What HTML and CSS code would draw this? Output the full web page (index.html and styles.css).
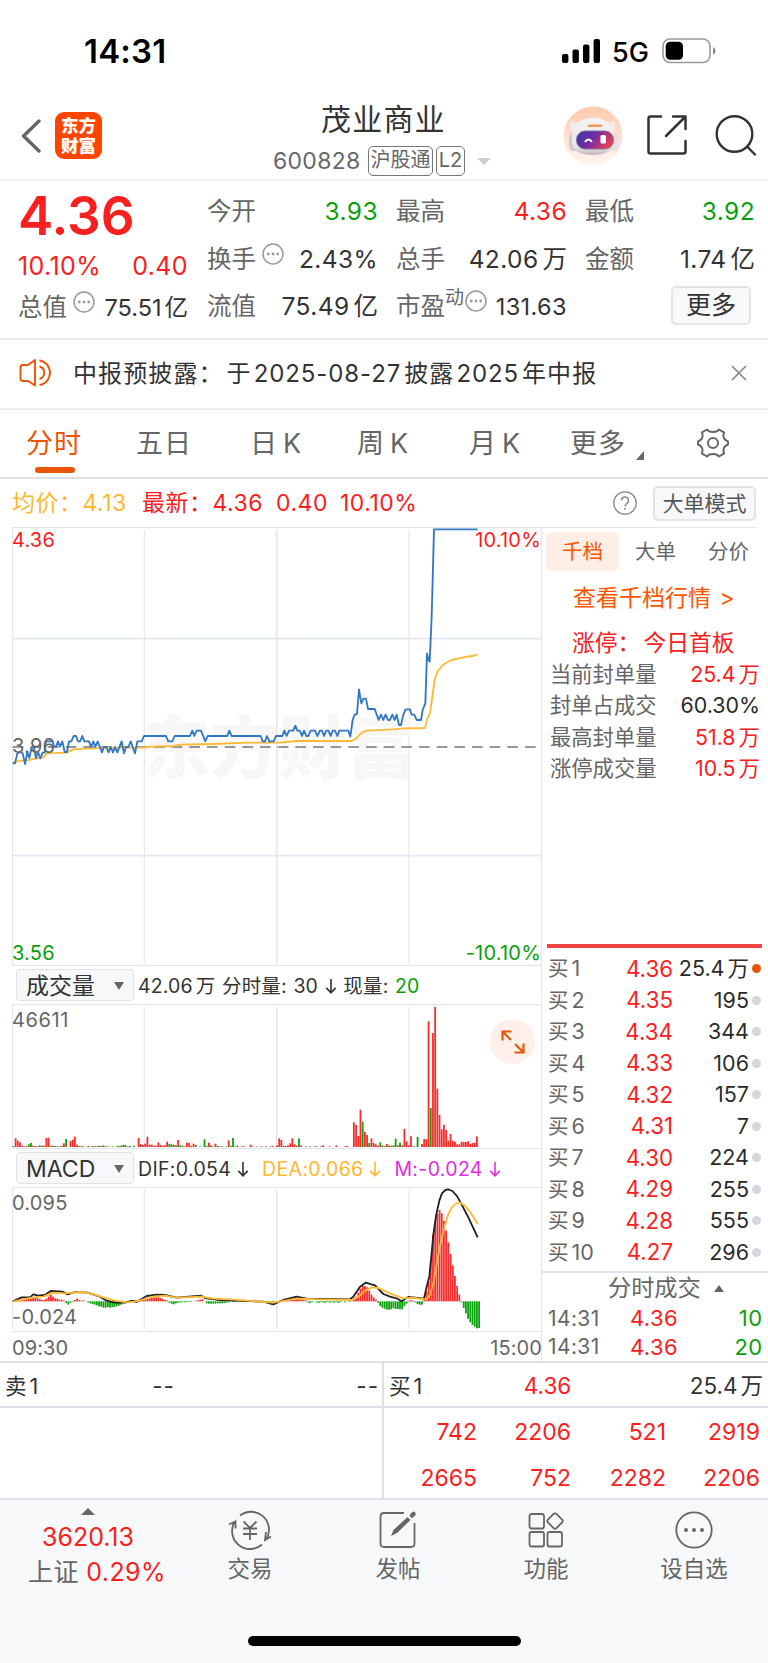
FILE: index.html
```html
<!DOCTYPE html>
<html lang="zh-CN">
<head>
  <meta charset="UTF-8">
  <meta name="viewport" content="width=device-width, initial-scale=1.0">
  <title>茂业商业 600828</title>
  <link rel="stylesheet" href="styles.css">
</head>
<body>
  <!-- Status bar -->
  <div class="status">
    <span class="clock">14:31</span>
    <div class="status-right">
      <svg width="39" height="24" viewBox="0 0 39 24"><rect x="0" y="15" width="6.4" height="9" rx="2"/><rect x="10.5" y="10.5" width="6.4" height="13.5" rx="2"/><rect x="21" y="5.5" width="6.4" height="18.5" rx="2"/><rect x="31.6" y="0" width="6.4" height="24" rx="2"/></svg>
      <span class="net">5G</span>
      <svg width="54" height="26" viewBox="0 0 54 26"><rect x="1" y="1" width="47" height="23.5" rx="7" fill="#fff" stroke="#999" stroke-width="1.6"/><rect x="3.7" y="3.7" width="17.3" height="18" rx="4.5"/><path d="M51 9v8q2.600-1.500 2.600-4T51 9z" fill="#8a8a8a"/></svg>
    </div>
  </div>

  <!-- Header -->
  <header class="header">
    <svg class="back" width="20" height="34" viewBox="0 0 20 34"><path d="M18 2 2.500 17 18 32" fill="none" stroke="#666" stroke-width="3.4" stroke-linecap="round" stroke-linejoin="round"/></svg>
    <div class="logo"><span>东方</span><span>财富</span></div>
    <div class="stock">
      <h1>茂业商业</h1>
      <div class="code"><span class="num">600828</span><span class="tag">沪股通</span><span class="tag tag-l2">L2</span><i class="down"></i></div>
    </div>
    <svg class="robot" width="60" height="60" viewBox="0 0 60 60">
      <defs>
        <linearGradient id="halo" x1="0" y1="0" x2="0" y2="1"><stop offset="0" stop-color="#ffc9ae"/><stop offset="1" stop-color="#fff6f2"/></linearGradient>
        <linearGradient id="visor" x1="0" y1="0" x2="1" y2="0.4"><stop offset="0" stop-color="#3237b5"/><stop offset="0.55" stop-color="#7a2b9c"/><stop offset="1" stop-color="#e0405a"/></linearGradient>
        <linearGradient id="shell" x1="0" y1="0" x2="0" y2="1"><stop offset="0" stop-color="#f7f5f6"/><stop offset="0.8" stop-color="#e6e2e6"/><stop offset="1" stop-color="#bdb7be"/></linearGradient>
      </defs>
      <circle cx="30" cy="30" r="29.5" fill="url(#halo)"/>
      <path d="M8 14q-3 9 3 14l9-12q-9 2-12-2zM51 14q3 9-3 14l-9-12q9 2 12-2z" fill="#f0ebee"/>
      <rect x="6" y="27" width="10" height="18" rx="5" fill="#cfc8d0"/><rect x="46" y="27" width="10" height="18" rx="5" fill="#e6dfe4"/>
      <path d="M9 36C8 19 17 12 30 12S52 19 51 36c0 9-9 13-21 13S9 45 9 36z" fill="url(#shell)"/>
      <path d="m24 21 2-2.500h12l2 1.500-2 1z" fill="#ee9b52"/>
      <rect x="13.5" y="25" width="37" height="18" rx="8.5" fill="url(#visor)" stroke="#85758f"/>
      <path d="M22 36q3.500-5 7 0" fill="none" stroke="#fff" stroke-width="2"/><rect x="37.500" y="29" width="5.500" height="8.500" rx="1.500" fill="#fff"/>
    </svg>
    <svg class="share" width="40" height="40" viewBox="0 0 40 40" fill="none" stroke="#333" stroke-width="2.5" stroke-linecap="round" stroke-linejoin="round"><path d="M14 1.500H3.500q-2 0-2 2v33q0 2 2 2h33q2 0 2-2V26M26 1.500h12.500V14M38 2 19 21"/></svg>
    <svg class="search" width="42" height="42" viewBox="0 0 42 42" fill="none" stroke="#333" stroke-width="2.4" stroke-linecap="round"><circle cx="19.500" cy="20" r="17.800"/><path d="m32 32.500 8 8"/></svg>
  </header>

  <!-- Quote -->
  <section class="quote">
    <div class="q-main">
      <div class="price">4.36</div>
      <div class="q-row red"><span class="num">10.10%</span><span class="num">0.40</span></div>
      <div class="q-row"><label>总值<svg class="dots"><use href="#dots"/></svg></label><span class="small">75.51<b>亿</b></span></div>
    </div>
    <div class="q-col">
      <div class="q-row"><label>今开</label><span class="green num">3.93</span></div>
      <div class="q-row"><label>换手<svg class="dots"><use href="#dots"/></svg></label><span class="num">2.43%</span></div>
      <div class="q-row"><label>流值</label><span class="num">75.49<b>亿</b></span></div>
    </div>
    <div class="q-col">
      <div class="q-row"><label>最高</label><span class="red num">4.36</span></div>
      <div class="q-row"><label>总手</label><span class="num">42.06<b>万</b></span></div>
      <div class="q-row"><label>市盈<sup>动</sup><svg class="dots tight"><use href="#dots"/></svg></label><span class="small wide">131.63</span></div>
    </div>
    <div class="q-col">
      <div class="q-row"><label>最低</label><span class="green num">3.92</span></div>
      <div class="q-row"><label>金额</label><span class="num">1.74<b>亿</b></span></div>
      <div class="q-row end"><button class="btn-more">更多</button></div>
    </div>
  </section>

  <!-- Notice -->
  <section class="notice">
    <svg width="34" height="30" viewBox="0 0 34 30" fill="none" stroke="#ea5504" stroke-width="1.9" stroke-linejoin="round"><path d="M16 2v25.500L9 23H4q-2.500 0-2.500-2.500v-11Q1.500 7 4 7h5zM20.500 2.500a12.400 12.400 0 0 1 0 24.500M20.500 8.500a6.500 6.500 0 0 1 0 12.500"/></svg>
    <p>中报预披露：<span>于</span><b>2025-08-27</b>披露<b>2025</b>年中报</p>
    <svg width="16" height="16" viewBox="0 0 16 16"><path d="m1 1 14 14M15 1 1 15" stroke="#888" stroke-width="1.7"/></svg>
  </section>

  <!-- Period tabs -->
  <nav class="tabs">
    <a class="active">分时</a>
    <a>五日</a>
    <a>日<b>K</b></a>
    <a>周<b>K</b></a>
    <a>月<b>K</b></a>
    <a>更多<i class="corner"></i></a>
    <svg width="32" height="30" viewBox="0 0 32 30" fill="none" stroke="#666" stroke-width="2" stroke-linejoin="round"><path d="M10 1.500q1.500 2.500 6 2.500t6-2.500l5 2.800q-1.200 3.800 0 6 1 2 4 3.200v3q-3 1.200-4 3.200-1.200 2.200 0 6l-5 2.800q-1.500-2.500-6-2.500t-6 2.500l-5-2.800q1.200-3.800 0-6-1-2-4-3.200v-3q3-1.200 4-3.200 1.200-2.200 0-6z"/><circle cx="16" cy="15" r="5"/></svg>
  </nav>

  <div class="info">
    <span class="avg">均价：<em>4.13</em></span>
    <span class="red last">最新：<em>4.36</em></span>
    <span class="red">0.40</span>
    <span class="red">10.10%</span>
    <svg width="24" height="24" viewBox="0 0 24 24" fill="none" stroke="#888" stroke-width="1.3"><circle cx="12" cy="12" r="11.200"/><path d="M8.500 9.500a3.500 3.500 0 1 1 5.800 2.600q-2.300 1.600-2.300 3.400M12 17v1.800" stroke-width="1.6"/></svg>
    <button class="btn-mode">大单模式</button>
  </div>

  <main class="board">
    <!-- Charts -->
    <div class="charts">
      <div class="chart price-chart">
        <svg width="530" height="439" viewBox="36 351 1590 1317">
          <g class="grid"><path d="M37.500 351V1668M36 352.500H1626M36 1666H1626M433 360V1660M1227 360V1660M1624 351V1668"/><path d="M830 360V1660M36 686H1626M36 1337H1626" stroke-width="5"/></g>
          <text class="mark" x="425" y="1090" textLength="820">东方财富</text>
          <path d="M38 1011H1614" stroke="#777" stroke-width="4" stroke-dasharray="32 21"/>
          <polyline class="line avg-line" points="38,1058 60,1052 80,1052 110,1045 130,1042 140,1030 200,1028 220,1018 280,1015 340,1013 432,1013 450,1010 520,1008 540,1004 640,1002 740,998 840,998 890,993 1055,993 1070,984 1085,968 1100,962 1180,958 1210,955 1275,954 1282,925 1290,910 1297,860 1304,810 1312,784 1332,762 1355,750 1400,740 1420,738 1433,732"/>
          <polyline class="line price-line" points="38,1060 45,1060 52,1030 60,1026 68,1030 75,1062 82,1026 88,1044 95,1012 102,1012 108,1045 114,1026 121,1045 128,1028 134,1028 138,994 158,994 162,1010 168,1010 174,994 180,1010 187,994 194,1026 201,1026 207,994 214,994 221,978 228,978 234,994 240,994 247,978 253,994 267,994 273,1011 280,994 286,1011 293,994 306,1027 312,1011 319,1011 326,1027 332,1011 339,1027 345,1011 352,1027 365,994 372,1030 378,1011 385,1011 392,994 405,1030 412,994 425,994 432,978 498,978 505,994 517,994 524,978 570,978 577,962 583,978 590,962 603,962 616,994 623,978 682,978 688,962 695,978 782,978 788,994 795,994 801,978 808,994 821,994 828,978 847,978 853,962 860,978 867,962 880,962 886,947 892,962 899,962 906,978 912,962 919,978 925,978 932,962 945,962 952,978 960,962 966,962 972,978 979,962 985,962 992,978 998,962 1005,962 1012,978 1018,962 1045,962 1051,980 1058,930 1064,914 1071,912 1077,838 1084,880 1090,866 1098,866 1104,897 1124,897 1136,930 1143,914 1150,930 1157,914 1164,930 1170,930 1177,914 1184,930 1190,914 1197,945 1203,945 1210,914 1217,898 1230,898 1235,914 1243,914 1250,930 1263,930 1268,900 1276,880 1281,730 1285,748 1289,755 1295,620 1302,358 1433,358"/>
        </svg>
        <span class="lab red tl">4.36</span><span class="lab red tr">10.10%</span>
        <span class="lab mid">3.96</span>
        <span class="lab green bl">3.56</span><span class="lab green br">-10.10%</span>
      </div>

      <div class="ind">
        <div class="select">成交量<i></i></div>
        <span class="vol-txt">42.06<b>万</b> 分时量: 30 <svg class="arr"><use href="#arrow"/></svg> 现量: <em class="green">20</em></span>
      </div>
      <div class="chart vol-chart">
        <svg width="530" height="145" viewBox="36 132 1590 435">
          <g class="grid"><path d="M37.500 132V567M36 134H1626M433 141V567M1227 141V567M1624 132V567M36 566H1626"/><path d="M830 141V567" stroke-width="5"/></g>
          <g id="vol"></g>
        </svg>
        <span class="lab tl">46611</span>
        <div class="expand"><svg width="24" height="24" viewBox="0 0 24 24" fill="none" stroke="#ea5504" stroke-width="2.2"><path d="M1.500 10.500v-9h9M2 2l8 8M22.500 13.500v9h-9M22 22l-8-8"/></svg></div>
      </div>

      <div class="ind">
        <div class="select">MACD<i></i></div>
        <span class="macd-txt"><span>DIF:0.054 <svg class="arr"><use href="#arrow"/></svg></span><span class="avg">DEA:0.066 <svg class="arr"><use href="#arrow"/></svg></span><span class="mag">M:-0.024 <svg class="arr"><use href="#arrow"/></svg></span></span>
      </div>
      <div class="chart macd-chart">
        <svg width="530" height="145" viewBox="36 681 1590 435">
          <g class="grid"><path d="M37.500 681V1108M36 682.500H1626M433 690V1108M1227 690V1108M1624 681V1116M36 1115H1626"/><path d="M830 690V1108" stroke-width="5"/></g>
          <g id="macd"></g>
          <polyline class="line dif-line" points="38,1024 65,1012 90,1012 100,1003 115,1007 135,1005 152,993 187,995 203,1003 225,996 262,998 300,1010 320,1022 345,1028 375,1028 397,1022 410,1026 440,1008 470,1004 495,1005 530,1013 603,1007 615,1014 660,1020 790,1025 820,1033 850,1020 890,1010 920,1016 1050,1018 1060,1010 1080,980 1097,968 1125,976 1150,1002 1170,1010 1190,1015 1205,1024 1225,1011 1272,1016 1280,980 1288,950 1294,890 1300,825 1308,768 1318,722 1326,700 1336,690 1345,688 1357,693 1370,707 1382,728 1405,772 1433,832"/>
          <polyline class="line avg-line" points="38,1025 100,1012 130,1010 160,998 195,1000 240,996 270,1000 310,1012 345,1022 380,1027 410,1024 460,1010 495,1007 530,1013 605,1010 640,1016 700,1019 820,1028 890,1016 960,1018 1055,1020 1075,1010 1095,992 1115,982 1135,984 1170,1000 1210,1015 1235,1013 1278,1018 1290,1004 1300,970 1308,925 1318,868 1332,805 1345,762 1357,740 1369,730 1381,728 1395,737 1410,755 1433,792"/>
        </svg>
        <span class="lab tl">0.095</span><span class="lab bl">-0.024</span>
      </div>
      <div class="times"><span>09:30</span><span>15:00</span></div>
    </div>

    <!-- Order book -->
    <aside class="book">
      <div class="book-tabs"><a class="active">千档</a><a>大单</a><a>分价</a></div>
      <a class="book-link">查看千档行情 <span>&gt;</span></a>
      <div class="limit">涨停：<span>今日首板</span></div>
      <ul class="stats">
        <li><span>当前封单量</span><span class="red">25.4<b>万</b></span></li>
        <li><span>封单占成交</span><span class="dark">60.30%</span></li>
        <li><span>最高封单量</span><span class="red">51.8<b>万</b></span></li>
        <li><span>涨停成交量</span><span class="red">10.5<b>万</b></span></li>
      </ul>
      <ul class="bids">
        <li><span>买<b>1</b></span><em>4.36</em><span class="dark">25.4<b>万</b></span><i class="hot"></i></li>
        <li><span>买<b>2</b></span><em>4.35</em><span class="dark">195</span><i></i></li>
        <li><span>买<b>3</b></span><em>4.34</em><span class="dark">344</span><i></i></li>
        <li><span>买<b>4</b></span><em>4.33</em><span class="dark">106</span><i></i></li>
        <li><span>买<b>5</b></span><em>4.32</em><span class="dark">157</span><i></i></li>
        <li><span>买<b>6</b></span><em>4.31</em><span class="dark">7</span><i></i></li>
        <li><span>买<b>7</b></span><em>4.30</em><span class="dark">224</span><i></i></li>
        <li><span>买<b>8</b></span><em>4.29</em><span class="dark">255</span><i></i></li>
        <li><span>买<b>9</b></span><em>4.28</em><span class="dark">555</span><i></i></li>
        <li><span>买<b>10</b></span><em>4.27</em><span class="dark">296</span><i></i></li>
      </ul>
      <div class="deals">
        <h2>分时成交<i></i></h2>
        <div class="deal"><span>14:31</span><em>4.36</em><span class="green">10</span></div>
        <div class="deal"><span>14:31</span><em>4.36</em><span class="green">20</span></div>
      </div>
    </aside>
  </main>

  <!-- Queue -->
  <section class="queue">
    <div class="side">
      <div class="side-head"><span>卖<b>1</b></span><span class="dash">--</span><span class="dash">--</span></div>
    </div>
    <div class="side">
      <div class="side-head"><span>买<b>1</b></span><span class="red">4.36</span><span>25.4<b>万</b></span></div>
      <div class="lots"><span>742</span><span>2206</span><span>521</span><span>2919</span><span>2665</span><span>752</span><span>2282</span><span>2206</span></div>
    </div>
  </section>

  <!-- Bottom bar -->
  <footer class="bottom">
    <div class="index"><i></i><span class="red">3620.13</span><div>上证 <span class="red">0.29%</span></div></div>
    <a><svg width="44" height="40" viewBox="0 0 44 40"><path d="M12 5.500A18 18 0 0 1 39 28M34 34.500A18 18 0 0 1 6.500 12M1 14.500l6.500-3v7M43 26.500l-6 3.500 1-8M15.500 11.500 22 18l6.500-6.500M22 18v12M15 18.500h14M15 24h14"/></svg>交易</a>
    <a><svg width="44" height="40" viewBox="0 0 44 40"><path d="M28 3H8q-3.500 0-3.500 3.500v27Q4.500 37 8 37h27q3.500 0 3.500-3.500V13"/><path d="M36 5.500 37.500 4" stroke-width="4.5" stroke-linecap="round"/><path d="m15 26 2.500-6L31.500 7l3 3L21 23z" fill="#666" stroke="none"/></svg>发帖</a>
    <a><svg width="44" height="40" viewBox="0 0 44 40"><rect x="5.500" y="4" width="14.500" height="14.500" rx="2"/><rect x="5.500" y="22" width="14.500" height="14.500" rx="2"/><rect x="23.500" y="22" width="14.500" height="14.500" rx="2"/><rect x="25" y="5" width="12" height="12" rx="2" transform="rotate(45 31 11)"/></svg>功能</a>
    <a><svg width="44" height="40" viewBox="0 0 44 40"><circle cx="22" cy="20" r="17.700"/><g fill="#666" stroke="none"><circle cx="14" cy="20" r="2"/><circle cx="22" cy="20" r="2"/><circle cx="30" cy="20" r="2"/></g></svg>设自选</a>
    <div class="home"></div>
  </footer>

  <svg class="defs">
    <symbol id="dots" viewBox="0 0 22 22"><circle cx="11" cy="11" r="10" fill="none" stroke="#999" stroke-width="1.5"/><g fill="#999"><circle cx="6.300" cy="11" r="1.400"/><circle cx="11" cy="11" r="1.400"/><circle cx="15.700" cy="11" r="1.400"/></g></symbol>
    <symbol id="arrow" viewBox="0 0 12 16"><path d="M6 0v14.500M1 9.500l5 5.200 5-5.200" fill="none" stroke="currentColor" stroke-width="1.7"/></symbol>
  </svg>

  <script>
    // One value per minute, negative volume = price went down
    const volume = [-3,26,19,14,4,2,3,-8,-12,4,3,2,-5,4,4,27,28,-4,4,-3,2,-2,4,11,-24,0,18,22,31,7,3,-3,2,0,3,0,3,-3,2,-4,3,-5,-2,2,0,-2,0,-2,-3,4,-6,-6,2,-3,0,-4,0,27,9,6,10,31,7,7,4,4,14,6,4,5,16,-9,-8,7,-5,21,-5,-4,2,13,12,4,10,-6,0,-2,0,-23,-3,13,5,-2,10,-3,2,-2,0,-2,20,-3,-27,2,-4,0,2,2,0,0,7,-2,0,2,0,2,0,-2,0,2,3,0,5,26,21,-4,3,5,11,26,8,4,-26,5,0,-2,0,2,0,-2,2,0,2,5,0,0,2,0,0,5,0,0,0,2,3,0,0,74,66,33,112,-76,46,36,-12,26,12,8,4,-14,5,-3,9,-5,4,-5,-25,5,-13,5,54,17,5,32,2,-2,-30,0,9,24,23,377,-117,342,420,175,96,53,67,51,19,39,19,16,8,8,16,15,15,17,9,12,13,32];
    const macd = [0,1,3,5,6,7,8,9,9,10,10,9,7,4,4,8,14,20,14,9,8,5,5,3,-5,-10,-4,-2,4,8,4,2,3,0,-3,-6,-8,-10,-12,-15,-16,-19,-19,-17,-19,-17,-17,-15,-13,-10,-6,-3,0,-2,-1,-3,2,3,4,5,6,9,10,10,11,12,12,10,7,4,3,-4,-7,-9,-6,-4,-3,-3,-3,-2,-2,-2,0,2,3,5,6,0,-6,-7,-7,-7,-7,-6,-6,-6,-5,-4,-3,0,-2,-2,-2,0,-2,-2,-2,-2,-2,-2,-2,-2,-3,-3,-4,-5,-5,-5,-3,-2,1,2,4,6,8,8,8,7,8,8,7,6,5,3,-3,-5,-3,0,-3,-5,-2,-3,-5,-2,-4,-2,-4,-2,-5,-2,0,-3,0,-2,2,6,14,26,38,46,46,42,32,20,12,5,-4,-14,-19,-22,-25,-25,-24,-20,-23,-23,-24,-24,-14,-7,2,4,2,-3,-8,-10,-10,12,30,60,120,200,240,262,274,264,241,212,177,142,108,76,46,20,-3,-20,-36,-52,-63,-71,-76,-81,-80];

    function drawBars(id, values, base) {
      document.getElementById(id).innerHTML = values.map((v, i) => {
        const x = 37.5 + i * 6.59;
        const up = v > 0;
        const y = id === 'vol' || up ? base - Math.abs(v) : base;
        return `<rect x="${x.toFixed(1)}" y="${y}" width="5.4" height="${Math.abs(v)}" fill="${up ? '#fa2b2b' : '#0ca00c'}"/>`;
      }).join('');
    }

    drawBars('vol', volume, 561);
    drawBars('macd', macd, 1024);
  </script>
</body>
</html>
```
FILE: styles.css
```css
* {
  box-sizing: border-box;
}

body {
  margin: 0;
  width: 768px;
  height: 1663px;
  overflow: hidden;
  background: #fff;
  color: #333;
  font-family: Inter, "Noto Sans CJK SC", sans-serif;
  font-size: 24px;
  line-height: 1;
  white-space: nowrap;
}

ul, h1, h2, p {
  margin: 0;
  padding: 0;
  list-style: none;
  font-weight: 400;
}

b, em {
  font-weight: inherit;
  font-style: normal;
}

button {
  font-family: inherit;
  padding: 0;
  color: #333;
  background: #f7f8fa;
  border: 2px solid #e2e4e9;
  border-radius: 5px;
}

svg {
  display: block;
  flex: none;
}

.red { color: #fa2020; }
.green { color: #0a9f0a; }
.avg { color: #ffb72e; }
.mag { color: #e32be3; }
.dark { color: #2b2b2b; }

.defs {
  width: 0;
  height: 0;
}

/* Status bar */
.status {
  display: flex;
  justify-content: space-between;
  height: 90px;
  padding: 38px 52px 0 84px;
  color: #000;
}

.clock {
  font-size: 33px;
  line-height: 27px;
  font-weight: 600;
  letter-spacing: 0.2px;
}

.status-right {
  display: flex;
  align-items: center;
  height: 26px;
}

.net {
  width: 37px;
  margin: 2px 13px 0 11px;
  font-size: 27px;
  font-weight: 500;
}

/* Header */
.header {
  display: flex;
  height: 91px;
  padding-left: 21px;
  border-bottom: 2px solid #f0f0f0;
}

.back { margin-top: 29px; }

.logo {
  display: flex;
  flex-direction: column;
  justify-content: center;
  align-items: center;
  width: 47px;
  height: 47px;
  margin: 22px 0 0 14px;
  border-radius: 9px;
  background: #ff4400;
  color: #fff;
  font-size: 17.5px;
  line-height: 19.5px;
  font-weight: 900;
}

.stock {
  width: 461px;
  padding-left: 171px;
}

h1 {
  margin-top: 13px;
  font-size: 30px;
  line-height: 32px;
  letter-spacing: 1.2px;
  padding-left: 48px;
}

.code {
  display: flex;
  align-items: center;
  height: 32px;
  margin-top: 10px;
  color: #666;
}

.code .num {
  width: 95px;
  font-size: 23px;
  letter-spacing: 0.3px;
}

.tag {
  width: 65px;
  height: 30px;
  margin-right: 3px;
  border: 1.5px solid #777;
  border-radius: 5px;
  font-size: 20px;
  line-height: 27px;
  text-align: center;
}

.tag-l2 { width: 29px; }

.down {
  margin-left: 9px;
  border: 7px solid transparent;
  border-top-color: #ccc;
  border-bottom: 0;
}

.robot { margin-top: 16px; }
.share { margin: 25px 0 0 24px; }
.search { margin: 24px 0 0 28px; }

/* Quote */
.quote {
  display: grid;
  grid-template-columns: 171px 171px 171px 170px;
  column-gap: 18px;
  height: 159px;
  padding-left: 18px;
  border-bottom: 2px solid #ececec;
}

.q-main { padding-top: 8px; }
.q-col { padding-top: 7px; }

.price {
  height: 54px;
  color: #fa2020;
  font-size: 53px;
  line-height: 55px;
  font-weight: 600;
}

.q-row {
  display: flex;
  align-items: center;
  justify-content: space-between;
  height: 47.3px;
  font-size: 24.5px;
}

.q-row label {
  display: flex;
  color: #666;
}

.q-row .num { letter-spacing: 0.4px; }
.q-row b { margin-left: 4px; letter-spacing: 0; }

.q-main .q-row:nth-child(2) { height: 47px; font-size: 25px; padding-right: 1px; }
.q-main .q-row:nth-child(3) { height: 38px; margin-top: -2px; padding-right: 1px; }

.q-row .small {
  font-size: 23.5px;
  padding-top: 2px;
}

.q-row .small b { margin-left: 3px; }
.q-row .wide { letter-spacing: 0.4px; }

.dots {
  width: 22px;
  height: 22px;
  margin: -4px 0 0 6px;
}

.dots.tight { margin-left: 1px; }

sup {
  font-size: 19px;
  line-height: 19px;
  margin-top: -6px;
}

.end { justify-content: flex-end; }

.btn-more {
  width: 80px;
  height: 39px;
  margin: 0 4px 2px 0;
  font-size: 25px;
  line-height: 33px;
}

/* Notice */
.notice {
  display: flex;
  align-items: center;
  height: 70px;
  padding: 0 21px 2px 19px;
  border-bottom: 2px solid #eee;
}

.notice p {
  flex: 1;
  padding: 1px 0 0 20px;
  font-size: 24px;
  letter-spacing: 1.1px;
}

.notice p span { margin-left: 3px; }
.notice b { margin: 0 3px 0 2px; letter-spacing: 0.9px; }

/* Tabs */
.tabs {
  display: flex;
  align-items: center;
  position: relative;
  height: 69px;
  padding: 0 0 1px 26px;
  border-bottom: 2px solid #dfe1e8;
  font-size: 27px;
  color: #666;
}

.tabs a { letter-spacing: 1px; flex: none; }
.tabs b { margin-left: 5px; }
.tabs a:nth-child(1) { width: 110px; }
.tabs a:nth-child(2) { width: 114px; }
.tabs a:nth-child(3) { width: 107px; }
.tabs a:nth-child(4) { width: 112px; }
.tabs a:nth-child(5) { width: 101px; }
.tabs a:nth-child(6) { display: flex; align-items: flex-end; width: 127px; }

.tabs .active {
  color: #ea5504;
}

.tabs .active::after {
  content: "";
  position: absolute;
  left: 35px;
  bottom: 4px;
  width: 40px;
  height: 6px;
  border-radius: 3px;
  background: #ea5504;
}

.corner {
  margin: 0 0 -3px 10px;
  border-left: 8px solid transparent;
  border-bottom: 9px solid #666;
}

/* Info line */
.info {
  display: flex;
  align-items: center;
  height: 48px;
  padding-left: 12px;
  padding-right: 12px;
  font-size: 23px;
}

.info .avg { width: 130px; }
.info .last { width: 134px; }
.info .last + span { width: 64px; }
.info span { flex: none; letter-spacing: 0.5px; padding-top: 1px; }
.info svg { margin: 0 16px 0 auto; }

.btn-mode {
  width: 103px;
  height: 35px;
  font-size: 21px;
  line-height: 29px;
  color: #555;
}

/* Charts */
.board {
  display: flex;
  height: 834px;
}

.charts {
  width: 542px;
  padding-left: 12px;
}

.chart { position: relative; }

.grid {
  fill: none;
  stroke: #e3e6ee;
  stroke-width: 3.5;
}

.line {
  fill: none;
  stroke-width: 5.5;
  stroke-linejoin: round;
}

.price-line { stroke: #3377c4; }
.avg-line { stroke: #ffb934; }
.dif-line { stroke: #222; }

.mark {
  fill: #f7f7f7;
  font-size: 205px;
  font-weight: 900;
}

.lab {
  position: absolute;
  color: #666;
  font-size: 20px;
  line-height: 20px;
  letter-spacing: 0.2px;
}

.lab.red { color: #fa2020; }
.lab.green { color: #0a9f0a; }
.tl { left: 0; top: 3px; }
.tr { right: 1px; top: 3px; }
.mid { left: 0; top: 209px; }
.bl { left: 0; bottom: 3px; }
.br { right: 1px; bottom: 3px; }

.vol-chart .tl, .macd-chart .tl { top: 6px; }
.macd-chart .bl { bottom: 5px; }
.vol-chart .tl { letter-spacing: 0.6px; }

.ind {
  display: flex;
  align-items: center;
  height: 38px;
  padding-left: 4px;
  font-size: 19.5px;
}

.select {
  display: flex;
  align-items: center;
  justify-content: space-between;
  width: 118px;
  height: 32px;
  margin-right: 4px;
  padding: 2px 9px 0 9px;
  background: #f7f8fa;
  border: 1px solid #dfe1e6;
  border-radius: 4px;
  font-size: 23px;
}

.select i {
  border: 5px solid transparent;
  border-top: 8px solid #666;
  border-bottom: 0;
}

.vol-txt {
  padding-top: 3px;
  letter-spacing: 0.15px;
  word-spacing: 1px;
}

.vol-txt b { margin-left: 3px; }

.arr {
  display: inline-block;
  width: 12px;
  height: 15px;
  vertical-align: -1px;
}

.macd-txt {
  display: flex;
  gap: 13px;
  padding-top: 3px;
  letter-spacing: 0.35px;
}

.expand {
  position: absolute;
  right: 7px;
  top: 15px;
  display: grid;
  place-items: center;
  width: 45px;
  height: 45px;
  border-radius: 50%;
  background: #fdefe9;
}

.times {
  display: flex;
  justify-content: space-between;
  padding-top: 6px;
  color: #666;
  font-size: 20px;
  letter-spacing: 0.1px;
}

/* Order book */
.book {
  width: 227px;
  border-left: 1px solid #e3e6ee;
  margin-left: -1px;
  color: #666;
}

.book-tabs {
  display: flex;
  width: 215px;
  padding: 4px 0 0 4px;
  border-top: 1px solid #e3e6ee;
  font-size: 20.5px;
}

.book-tabs a {
  width: 73px;
  height: 39px;
  line-height: 40px;
  text-align: center;
  flex: none;
  border-radius: 6px;
}

.book-tabs .active {
  background: #ffeee6;
  color: #ff5500;
}

.book-link {
  display: block;
  padding: 16px 0 0 31px;
  color: #ff5500;
  font-size: 23px;
  line-height: 22px;
}

.book-link span { margin-left: 2px; }

.limit {
  padding: 22px 0 0 30px;
  color: #fa2020;
  font-size: 22.8px;
  line-height: 23px;
}

.limit span { margin-left: 3px; }

.stats {
  height: 294px;
  margin: 0 6px 0 5px;
  padding: 5px 2px 0 3px;
  border-bottom: 4px solid #ee4444;
}

.stats li {
  display: flex;
  justify-content: space-between;
  align-items: center;
  height: 31.4px;
  font-size: 21.3px;
}

.stats b, .bids span b, .side-head b { margin-left: 3px; }
.stats li span + span { font-size: 21.4px; }

.bids { padding-top: 5px; }

.bids li {
  display: grid;
  grid-template-columns: 61px 64px 76px 9px;
  align-items: center;
  height: 31.5px;
  padding-left: 6px;
  font-size: 20.5px;
}

.bids em {
  color: #fa2020;
  text-align: right;
  font-size: 22.3px;
}

.bids li > span:first-child b { font-size: 21.5px; }

.bids .dark {
  text-align: right;
  font-size: 21.5px;
}

.bids i {
  width: 9px;
  height: 9px;
  margin-left: 3px;
  border-radius: 50%;
  background: #d4d7dd;
}

.bids .hot { background: #ea5504; }

.deals {
  margin-top: 3px;
  border-top: 2px solid #e0e2e8;
}

.deals h2 {
  display: flex;
  align-items: center;
  height: 31px;
  padding-left: 66px;
  font-size: 23.2px;
}

.deals h2 i {
  margin-left: 13px;
  border: 5px solid transparent;
  border-bottom: 7px solid #666;
  border-top: 0;
}

.deal {
  display: grid;
  grid-template-columns: 56px 74px 84.5px;
  align-items: center;
  height: 28.5px;
  padding-left: 6px;
  font-size: 21px;
  letter-spacing: 0.4px;
}

.deal em { color: #fa2020; text-align: right; font-size: 22px; }
.deal .green { text-align: right; font-size: 22px; }

/* Queue */
.queue {
  display: flex;
  height: 139px;
  border-top: 2px solid #dcdfe5;
  border-bottom: 2px solid #dcdfe5;
}

.side { width: 384px; }
.side:first-child { border-right: 2px solid #dcdfe5; }

.side-head {
  display: grid;
  grid-template-columns: 105px 1fr 162px;
  align-items: center;
  height: 45px;
  padding: 4px 5px 0;
  border-bottom: 2px solid #dcdfe5;
  font-size: 22.5px;
}

.side-head span { text-align: center; }
.side-head span:first-child { text-align: left; font-size: 21.5px; }
.side-head span:last-child { text-align: right; }
.side-head .dash { letter-spacing: 1px; }
.side:first-child .side-head { padding-right: 3px; }

.lots {
  display: grid;
  grid-template-columns: 93px 94px 95px 94px;
  color: #fa2020;
  text-align: right;
  font-size: 23px;
  line-height: 46px;
  padding-top: 1px;
}

/* Bottom bar */
.bottom {
  display: flex;
  position: relative;
  height: 164px;
  background: #f7f8fa;
  color: #666;
}

.bottom a {
  width: 148px;
  padding-top: 10px;
  font-size: 22.5px;
  text-align: center;
}

.bottom a svg {
  margin: 0 auto 8px;
  fill: none;
  stroke: #666;
  stroke-width: 1.8;
}

.index {
  display: flex;
  flex-direction: column;
  align-items: center;
  width: 176px;
  font-size: 25px;
}

.index i {
  margin: 8px 0 10px;
  border: 7px solid transparent;
  border-bottom: 7px solid #666;
  border-top: 0;
}

.index div { margin: 10px 0 0 18px; letter-spacing: 0.4px; }

.home {
  position: absolute;
  left: 248px;
  bottom: 18px;
  width: 273px;
  height: 10px;
  border-radius: 5px;
  background: #000;
}
```
